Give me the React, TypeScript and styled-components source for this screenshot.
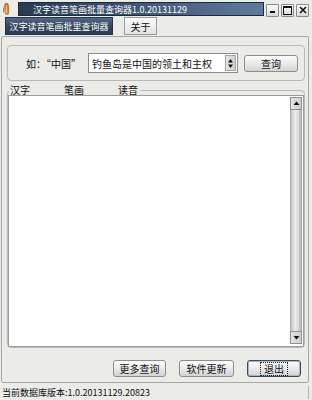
import styled, { createGlobalStyle } from 'styled-components'

const GlobalStyle = createGlobalStyle`
  html, body {
    margin: 0;
    padding: 0;
    background: #ebebe7;
  }
  * {
    box-sizing: border-box;
  }
`

const Window = styled.div`
  width: 312px;
  height: 400px;
  display: flex;
  flex-direction: column;
  background: #ebebe7;
  font-family: 'Noto Sans CJK SC', 'DejaVu Sans', sans-serif;
  font-size: 10px;
  color: #111;
  overflow: hidden;
`

const TitleBar = styled.div`
  height: 17px;
  display: flex;
  align-items: center;
  padding: 1px 3px 0 2px;
`

const AppIcon = styled.svg`
  width: 9px;
  height: 14px;
  flex-shrink: 0;
`

const TitleStrip = styled.div`
  flex: 1;
  height: 14px;
  margin-left: 7px;
  padding-left: 14px;
  line-height: 13px;
  color: #fff;
  font-size: 9px;
  white-space: nowrap;
  background: linear-gradient(to right, #293a52 0%, #3e5473 45%, #617a9c 100%);
  border: 1px solid #1e2b3d;
`

const Controls = styled.div`
  display: flex;
  gap: 2px;
  margin-left: 2px;
  padding-top: 2px;
`

const CtrlButton = styled.div`
  width: 13px;
  height: 13px;
  border: 1px solid #8a8a8a;
  border-radius: 1px;
  background: linear-gradient(#fdfdfd, #d6d6d6);
  display: flex;
  align-items: center;
  justify-content: center;
`

const TabBar = styled.div`
  height: 19px;
  display: flex;
  gap: 11px;
  padding: 0 0 1px 5px;
`

const Tab = styled.div<{ $active?: boolean }>`
  width: ${({ $active }) => ($active ? '108px' : '33px')};
  height: 18px;
  display: flex;
  align-items: center;
  justify-content: center;
  font-size: ${({ $active }) => ($active ? '9px' : '10px')};
  white-space: nowrap;
  color: ${({ $active }) => ($active ? '#fff' : '#111')};
  border: 1px solid ${({ $active }) => ($active ? '#26334a' : '#9a9a9a')};
  background: ${({ $active }) =>
    $active
      ? 'linear-gradient(#53688a, #34465f 50%, #2b3b52)'
      : 'linear-gradient(#fafafa, #e2e2e2)'};
`

const TabPage = styled.div`
  flex: 1;
  margin: 0 3px 0 1px;
  border: 1px solid #a6a6a6;
  border-radius: 2px;
  padding: 8px 3px 0 5px;
  display: flex;
  flex-direction: column;
`

const QueryGroup = styled.div`
  height: 36px;
  border: 1px solid #b9b9b9;
  border-radius: 4px;
  display: flex;
  align-items: center;
  padding-left: 18px;
`

const HintLabel = styled.span`
  width: 62px;
  flex-shrink: 0;
  white-space: nowrap;
`

const Combo = styled.div`
  width: 150px;
  height: 20px;
  flex-shrink: 0;
  border: 1px solid #8c8c8c;
  background: #fff;
  display: flex;
  align-items: center;
  padding-left: 3px;
`

const ComboText = styled.span`
  flex: 1;
  white-space: nowrap;
`

const Spinner = styled.div`
  width: 11px;
  height: 16px;
  margin-right: 1px;
  border: 1px solid #a4a4a4;
  background: linear-gradient(to right, #e6e6e6, #cfcfcf);
  display: flex;
  align-items: center;
  justify-content: center;
`

const Button = styled.div<{ $width: number; $default?: boolean }>`
  width: ${({ $width }) => $width}px;
  height: 17px;
  flex-shrink: 0;
  display: flex;
  align-items: center;
  justify-content: center;
  border: 1px solid ${({ $default }) => ($default ? '#3d4a5c' : '#8d8d8d')};
  border-radius: 3px;
  background: linear-gradient(#fdfdfd, #e8e8e8 55%, #d3d3d3);
  box-shadow: ${({ $default }) => ($default ? 'inset 0 0 0 1px #a9b4c4' : 'none')};
  font-size: 10px;
`

const QueryButton = styled(Button)`
  margin-left: 6px;
`

const FocusRing = styled.span`
  border: 1px dotted #222;
  padding: 0 3px;
  line-height: 12px;
`

const ListGroup = styled.div`
  flex: 1;
  margin-top: 9px;
  border: 1px solid #b9b9b9;
  border-radius: 4px;
  display: flex;
  flex-direction: column;
`

const ListHeader = styled.div`
  align-self: flex-start;
  height: 11px;
  margin: -7px 0 0 1px;
  display: flex;
  background: #ebebe7;
  line-height: 11px;
`

const HeaderCell = styled.span<{ $width?: number }>`
  width: ${({ $width }) => ($width ? `${$width}px` : 'auto')};
  padding: 0 2px 0 1px;
`

const ListBox = styled.div`
  flex: 1;
  border: 1px solid #9c9c9c;
  background: #fff;
  display: flex;
  justify-content: flex-end;
  padding: 1px 1px 2px 0;
`

const ScrollBar = styled.div`
  width: 12px;
  display: flex;
  flex-direction: column;
`

const ScrollArrow = styled.div`
  height: 13px;
  border: 1px solid #8f8f8f;
  background: linear-gradient(to right, #e4e4e4, #cdcdcd);
  display: flex;
  align-items: center;
  justify-content: center;
`

const ScrollTrack = styled.div`
  flex: 1;
  background: linear-gradient(
    to right,
    #a3a3a3 0%,
    #cfcfcf 15%,
    #ececec 45%,
    #d2d2d2 75%,
    #9d9d9d 100%
  );
`

const Footer = styled.div`
  height: 17px;
  margin: 12px 4px 5px 0;
  display: flex;
  justify-content: flex-end;
  gap: 13px;
`

const StatusBar = styled.div`
  height: 17px;
  display: flex;
  align-items: center;
  padding: 1px 3px 0 2px;
  font-size: 9px;
  white-space: nowrap;
`

const StatusText = styled.span`
  flex: 1;
`

const StatusGrip = styled.span`
  width: 1px;
  height: 13px;
  background: #b2b2b2;
`

const Triangle = ({ up }: { up?: boolean }) => (
  <svg width="7" height="5" viewBox="0 0 7 5">
    {up ? (
      <path d="M3.5 0.5 L6.5 4 L0.5 4 Z" fill="#111" />
    ) : (
      <path d="M0.5 1 L6.5 1 L3.5 4.5 Z" fill="#111" />
    )}
  </svg>
)

export default function App() {
  return (
    <Window>
      <GlobalStyle />
      <TitleBar>
        <AppIcon viewBox="0 0 9 14">
          <path d="M3 1 L6 1 L7 4 L7 12 L5 13 L3 12 L2 4 Z" fill="#c9722e" />
          <path d="M4 3 L5 3 L5.5 11 L3.5 11 Z" fill="#f3c27a" />
          <path d="M1 6 L2 5 L2.5 11 L1 10 Z" fill="#8c8c8c" />
        </AppIcon>
        <TitleStrip>汉字读音笔画批量查询器1.0.20131129</TitleStrip>
        <Controls>
          <CtrlButton>
            <svg width="7" height="7" viewBox="0 0 7 7">
              <rect x="1" y="4" width="5" height="2" fill="#111" />
            </svg>
          </CtrlButton>
          <CtrlButton>
            <svg width="9" height="9" viewBox="0 0 9 9">
              <rect x="0.5" y="0.5" width="8" height="8" fill="none" stroke="#111" />
              <rect x="0.5" y="0.5" width="8" height="1.5" fill="#111" />
            </svg>
          </CtrlButton>
          <CtrlButton>
            <svg width="8" height="8" viewBox="0 0 8 8">
              <path d="M1 1 L7 7 M7 1 L1 7" stroke="#111" strokeWidth="1.6" />
            </svg>
          </CtrlButton>
        </Controls>
      </TitleBar>

      <TabBar>
        <Tab $active>汉字读音笔画批里查询器</Tab>
        <Tab>关于</Tab>
      </TabBar>

      <TabPage>
        <QueryGroup>
          <HintLabel>如：“中国”</HintLabel>
          <Combo>
            <ComboText>钓鱼岛是中国的领土和主权</ComboText>
            <Spinner>
              <svg width="7" height="11" viewBox="0 0 7 11">
                <path d="M3.5 1 L6 4.5 L1 4.5 Z" fill="#111" />
                <path d="M1 6.5 L6 6.5 L3.5 10 Z" fill="#111" />
              </svg>
            </Spinner>
          </Combo>
          <QueryButton $width={54}>查询</QueryButton>
        </QueryGroup>

        <ListGroup>
          <ListHeader>
            <HeaderCell $width={54}>汉字</HeaderCell>
            <HeaderCell $width={54}>笔画</HeaderCell>
            <HeaderCell>读音</HeaderCell>
          </ListHeader>
          <ListBox>
            <ScrollBar>
              <ScrollArrow>
                <Triangle up />
              </ScrollArrow>
              <ScrollTrack />
              <ScrollArrow>
                <Triangle />
              </ScrollArrow>
            </ScrollBar>
          </ListBox>
        </ListGroup>

        <Footer>
          <Button $width={53}>更多查询</Button>
          <Button $width={55}>软件更新</Button>
          <Button $width={54} $default>
            <FocusRing>退出</FocusRing>
          </Button>
        </Footer>
      </TabPage>

      <StatusBar>
        <StatusText>当前数据库版本:1.0.20131129.20823</StatusText>
        <StatusGrip />
      </StatusBar>
    </Window>
  )
}
